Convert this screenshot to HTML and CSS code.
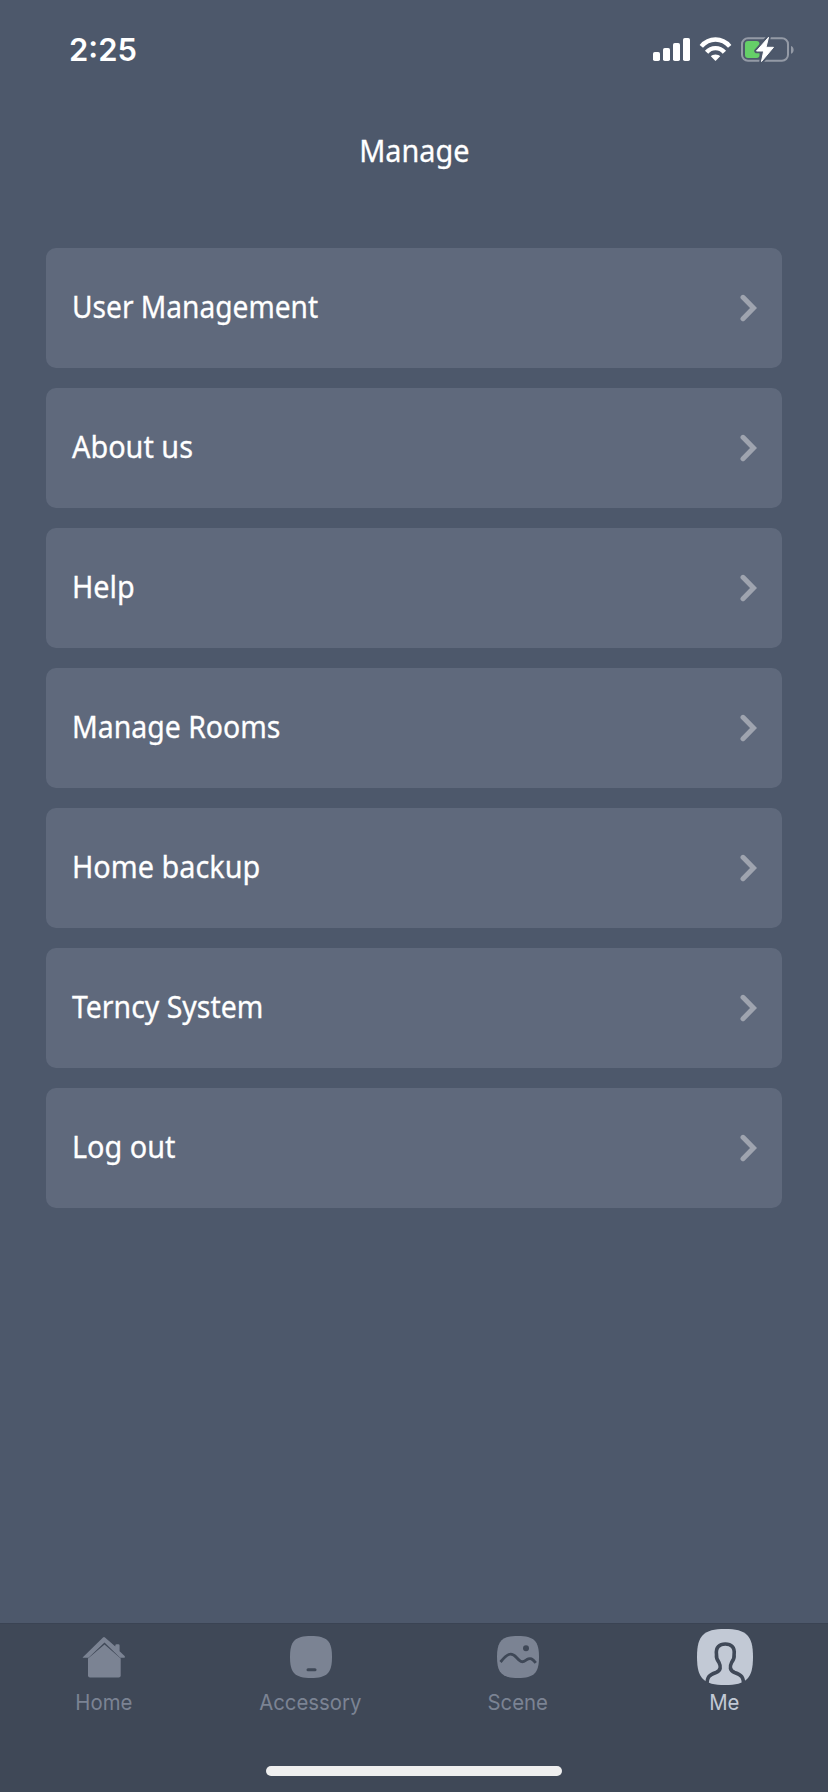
FILE: index.html
```html
<!DOCTYPE html>
<html lang="en">
<head>
<meta charset="utf-8">
<title>Manage</title>
<link rel="stylesheet" href="styles.css">
</head>
<body>
<div class="screen">
  <header class="status">
    <span class="time">2:25</span>
    <svg class="indicators" width="144" height="30" viewBox="0 0 144 30">
      <g fill="#fff">
        <rect x="1" y="17" width="7" height="9" rx="1.8"/>
        <rect x="11" y="13" width="7" height="13" rx="1.8"/>
        <rect x="21" y="8" width="7" height="18" rx="1.8"/>
        <rect x="31" y="3" width="7" height="23" rx="1.8"/>
        <path d="M63.500 19.500c2 0 3.700.8 4.700 1.700l-4.700 4.800-4.700-4.800c1-.9 2.700-1.700 4.700-1.700z"/>
      </g>
      <g fill="none" stroke="#fff" stroke-width="4.400">
        <path d="M49.300 11.300C57 2.200 70 2.200 77.700 11.300"/>
        <path d="M54.600 17.300c4.800-5.600 13-5.600 17.800 0"/>
      </g>
      <rect x="90" y="3.300" width="46" height="22.400" rx="6" fill="none" stroke="#949aa6" stroke-width="2"/>
      <path d="M139 11c3.500 1 3.500 6.800 0 7.800z" fill="#949aa6"/>
      <rect x="93" y="6" width="14.500" height="17" rx="3" fill="#65cf68"/>
      <path d="M116.500 2.300 104.500 16h7.200L109.500 26.500 121.500 12.300h-7.500z" fill="#fff" stroke="#4d586b" stroke-width="4.500" stroke-linejoin="round"/>
      <path d="M116.500 2.300 104.500 16h7.200L109.500 26.500 121.500 12.300h-7.500z" fill="#fff" stroke="#fff" stroke-width="1" stroke-linejoin="round"/>
    </svg>
  </header>
  <h1 class="title"><span class="label">Manage</span></h1>
  <main class="menu">
    <a class="card"><span class="label tightest">User Management</span><svg class="chevron" viewBox="0 0 18 28"><path d="M3 3.300 13.500 14 3 24.700"/></svg></a>
    <a class="card"><span class="label">About us</span><svg class="chevron" viewBox="0 0 18 28"><path d="M3 3.300 13.500 14 3 24.700"/></svg></a>
    <a class="card"><span class="label">Help</span><svg class="chevron" viewBox="0 0 18 28"><path d="M3 3.300 13.500 14 3 24.700"/></svg></a>
    <a class="card"><span class="label tighter">Manage Rooms</span><svg class="chevron" viewBox="0 0 18 28"><path d="M3 3.300 13.500 14 3 24.700"/></svg></a>
    <a class="card"><span class="label">Home backup</span><svg class="chevron" viewBox="0 0 18 28"><path d="M3 3.300 13.500 14 3 24.700"/></svg></a>
    <a class="card"><span class="label tighter">Terncy System</span><svg class="chevron" viewBox="0 0 18 28"><path d="M3 3.300 13.500 14 3 24.700"/></svg></a>
    <a class="card"><span class="label">Log out</span><svg class="chevron" viewBox="0 0 18 28"><path d="M3 3.300 13.500 14 3 24.700"/></svg></a>
  </main>
  <footer class="dock">
    <nav class="tabs">
      <a class="tab">
        <svg class="icon" viewBox="0 0 60 60">
          <path fill="currentColor" d="M8.600 33.500 29 13.600q1-1 2 0L41.300 22.500V21.500q0-1.300 1.500-1.300h1.500q1.300 0 1.300 1.300v5.800l5 4.600q1 1.800-1 1.800h-3.500L30.500 18.600 14.500 33.700H9z"/>
          <path fill="currentColor" d="M30.500 20.500 46.700 34.500v17q0 2-2 2H16q-2 0-2-2v-17z"/>
        </svg>
        <span class="tab-label">Home</span>
      </a>
      <a class="tab">
        <svg class="icon" viewBox="0 0 60 60">
          <path fill="currentColor" d="M30 12C46 12 51 17 51 33S46 54 30 54 9 49 9 33 14 12 30 12z"/>
          <rect x="25.500" y="44.200" width="10" height="3" rx="1.500" fill="#3f4857"/>
        </svg>
        <span class="tab-label">Accessory</span>
      </a>
      <a class="tab">
        <svg class="icon" viewBox="0 0 60 60">
          <path fill="currentColor" d="M30 12C46 12 51 17 51 33S46 54 30 54 9 49 9 33 14 12 30 12z"/>
          <circle cx="38" cy="24.300" r="3" fill="#3f4857"/>
          <path d="M12.500 38C19 30 23 27.500 28.500 33.500c5 5.500 6 5 10 2.300 4-2.500 6-1 9.300 3" fill="none" stroke="#3f4857" stroke-width="2.800"/>
        </svg>
        <span class="tab-label">Scene</span>
      </a>
      <a class="tab active">
        <svg class="icon" viewBox="0 0 60 60">
          <path fill="currentColor" d="M30 5C51.500 5 58 11.500 58 33S51.500 61 30 61 2 54.500 2 33 8.500 5 30 5z"/>
          <path d="M12 61C12 53 14 51 21 48.500c5-2 5-6 3-10q-3-3.500-2.500-8C20.500 23 24.500 20 30.300 20s9.800 3 8.800 10.500q.5 4.500-2.500 8c-2 4-2 8 3 10 7 2.500 9 4.500 9 12.500" fill="none" stroke="#3f4857" stroke-width="3.600"/>
        </svg>
        <span class="tab-label">Me</span>
      </a>
    </nav>
    <div class="home-indicator"></div>
  </footer>
</div>
</body>
</html>
```
FILE: styles.css
```css
* { box-sizing: border-box; }
body { margin: 0; }
.screen {
  width: 828px;
  height: 1792px;
  display: flex;
  flex-direction: column;
  overflow: hidden;
  background: #4d586b;
  color: #fff;
  font-family: "Noto Sans", sans-serif;
}
.status {
  height: 100px;
  padding: 0 32px 0 69px;
  display: flex;
  justify-content: space-between;
  align-items: center;
}
.time {
  font: 600 31px/40px Inter, sans-serif;
}
.title {
  height: 148px;
  margin: 0;
  padding-top: 29px;
  text-align: center;
  font-size: 31px;
  font-weight: 400;
  line-height: 42px;
}
.label {
  display: inline-block;
  transform: scaleX(.93);
  -webkit-text-stroke: .3px currentColor;
}
.label.tighter { transform: scaleX(.917); }
.label.tightest { transform: scaleX(.907); }
.menu {
  flex: 1;
  padding: 0 46px;
  display: flex;
  flex-direction: column;
  gap: 20px;
}
.card {
  height: 120px;
  padding: 0 24px 0 26px;
  display: flex;
  align-items: center;
  justify-content: space-between;
  border-radius: 10px;
  background: #5f697c;
  font-size: 31px;
  line-height: 42px;
}
.card .label {
  padding-bottom: 4px;
  transform-origin: left;
}
.chevron {
  width: 18px;
  height: 28px;
  fill: none;
  stroke: #9fa4af;
  stroke-width: 5;
  stroke-linecap: round;
}
.dock {
  height: 169px;
  display: flex;
  flex-direction: column;
  align-items: center;
  justify-content: space-between;
  padding-bottom: 16px;
  background: #3f4857;
  border-top: 1px solid #3a4353;
}
.tabs {
  width: 100%;
  display: grid;
  grid-template-columns: repeat(4, 1fr);
}
.tab {
  display: flex;
  flex-direction: column;
  align-items: center;
  gap: 4px;
  color: #7b8393;
  font: 400 22px/28px Inter, sans-serif;
}
.tab.active { color: #c2c9d5; }
.tab-label { transform: scaleX(.925); }
.icon {
  width: 60px;
  height: 60px;
  overflow: visible;
}
.home-indicator {
  width: 296px;
  height: 10px;
  border-radius: 5px;
  background: #efefef;
}
```
